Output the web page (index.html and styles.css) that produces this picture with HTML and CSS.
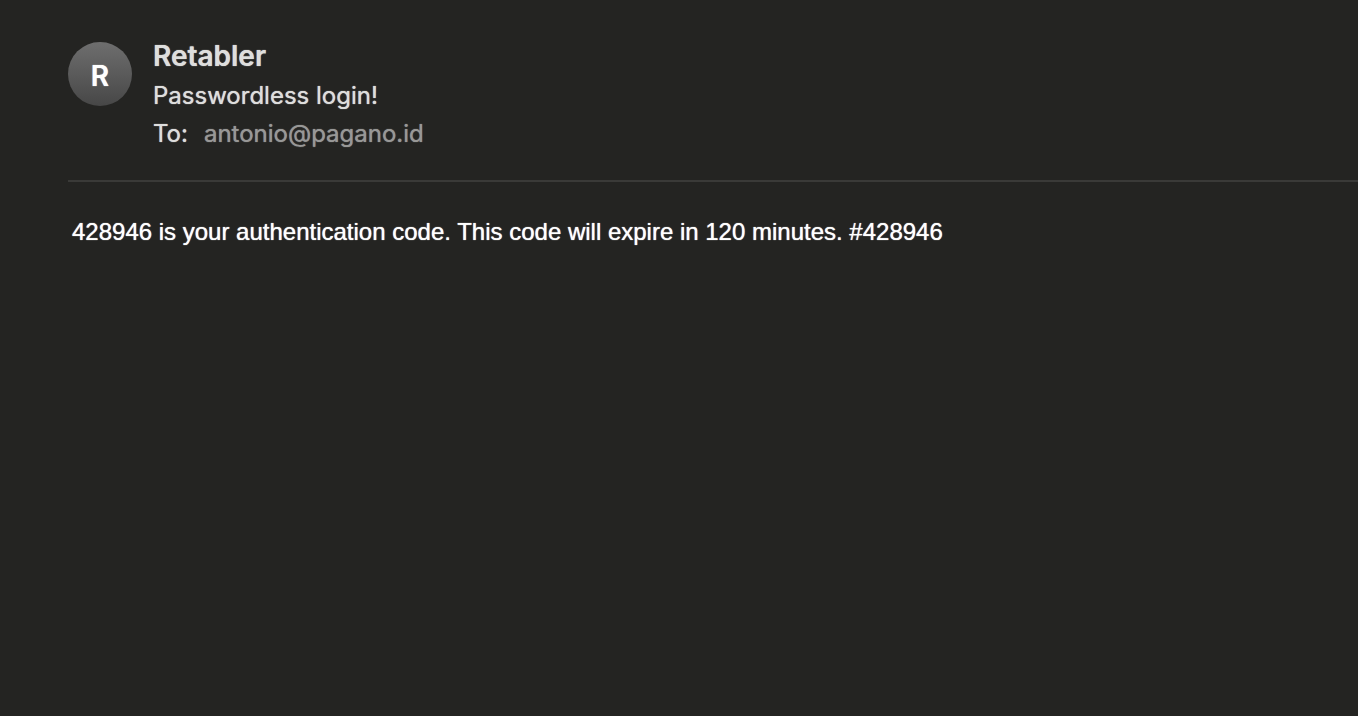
FILE: index.html
```html
<!DOCTYPE html>
<html lang="en">
  <head>
    <meta charset="UTF-8" />
    <meta name="viewport" content="width=device-width, initial-scale=1.0" />
    <title>Passwordless login!</title>
    <link rel="stylesheet" href="styles.css">
  </head>
  <body>
    <main class="message">
      <header class="message-header">
        <div class="avatar">R</div>
        <div class="details">
          <h1 class="sender">Retabler</h1>
          <p class="subject">Passwordless login!</p>
          <p class="recipient">
            <span>To:</span>
            <span class="address">antonio@pagano.id</span>
          </p>
        </div>
      </header>
      <p class="message-body">428946 is your authentication code. This code will expire in 120 minutes. #428946</p>
    </main>
  </body>
</html>
```
FILE: styles.css
```css
body {
  margin: 0;
  background: #242422;
  color: #dededd;
  font-family: Inter, "Liberation Sans", sans-serif;
  text-shadow: 0 0 1px currentColor;
}

h1,
p {
  margin: 0;
}

.message {
  padding: 36px 0 0 68px;
}

.message-header {
  display: flex;
  gap: 21px;
  padding-bottom: 27px;
  border-bottom: 2px solid #3a3a38;
}

.avatar {
  display: flex;
  align-items: center;
  justify-content: center;
  box-sizing: border-box;
  width: 64px;
  height: 64px;
  margin-top: 6px;
  padding-top: 4px;
  border-radius: 50%;
  background: linear-gradient(#6e6e6e, #474747);
  color: #fff;
  font-size: 28px;
  font-weight: 600;
}

.sender {
  margin-bottom: 1px;
  font-size: 28px;
  font-weight: 600;
  line-height: 40px;
}

.subject,
.recipient {
  font-size: 24px;
  line-height: 38px;
}

.recipient {
  display: flex;
  gap: 16px;
}

.address {
  color: #989897;
  text-shadow: 0 0 1px currentColor;
}

.message-body {
  padding: 36px 4px;
  color: #fff;
  font-family: "Liberation Sans", sans-serif;
  font-size: 24px;
  line-height: 28px;
}
```
